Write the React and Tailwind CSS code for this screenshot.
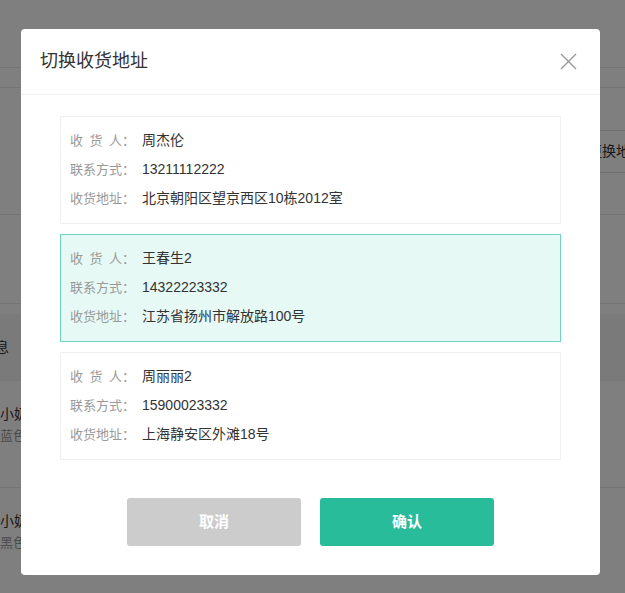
import React from 'react';

const ADDRESSES = [
    { id: 1, name: '周杰伦', phone: '13211112222', address: '北京朝阳区望京西区10栋2012室' },
    { id: 2, name: '王春生2', phone: '14322223332', address: '江苏省扬州市解放路100号' },
    { id: 3, name: '周丽丽2', phone: '15900023332', address: '上海静安区外滩18号' },
];

function Label({ chars }) {
    return (
        <div className="flex w-[72px] shrink-0 text-[13px] text-[#999]">
            <span className="flex w-[52px] justify-between">
                {chars.map((c) => (
                    <span key={c}>{c}</span>
                ))}
            </span>
            <span>：</span>
        </div>
    );
}

function AddressCard({ item, selected }) {
    return (
        <div
            className={`h-[108px] border pl-[9px] pt-[9px] pb-[10px] ${selected
                ? 'border-[#6fd5be] bg-[#e6f9f5]'
                : 'border-[#f0f0f0] bg-white'
                }`}
        >
            <div className="flex h-[29px] items-center">
                <Label chars={['收', '货', '人']} />
                <span className="text-[14px] text-[#333]">{item.name}</span>
            </div>
            <div className="flex h-[29px] items-center">
                <Label chars={['联', '系', '方', '式']} />
                <span className="text-[14px] text-[#333]">{item.phone}</span>
            </div>
            <div className="flex h-[29px] items-center">
                <Label chars={['收', '货', '地', '址']} />
                <span className="text-[14px] text-[#333]">{item.address}</span>
            </div>
        </div>
    );
}

export default function App() {
    const selectedId = 2;

    return (
        <div className="relative h-[593px] w-full overflow-hidden bg-white font-['Liberation_Sans','Noto_Sans_CJK_SC',sans-serif]">
            {/* page behind the dialog */}
            <div className="h-[68px] border-b border-[#e8e8e8]" />
            <div className="h-[20px] border-b border-[#e8e8e8]" />
            <div className="h-[127px] border-b border-[#e8e8e8] pt-[42px]">
                <div className="flex pl-[586px]">
                    <div className="flex h-[43px] w-[90px] shrink-0 items-center border border-[#dcdcdc] pl-[1px] text-[14px] text-[#333]">
                        更换地址
                    </div>
                </div>
            </div>
            <div className="mt-[88px] border-t border-[#e8e8e8] pt-[10px]">
                <div className="flex h-[67px] items-center bg-[#f5f5f5] text-[14px] text-[#333]">
                    <span className="-ml-[47px]">商品信息</span>
                </div>
                <div className="h-[107px] border-b border-[#e8e8e8] pt-[22px]">
                    <div className="h-[22px] text-[14px] leading-[22px] text-[#333]">小奶瓶保温杯</div>
                    <div className="h-[22px] text-[13px] leading-[22px] text-[#999]">蓝色 500ml</div>
                </div>
                <div className="pt-[22px]">
                    <div className="h-[22px] text-[14px] leading-[22px] text-[#333]">小奶瓶保温杯</div>
                    <div className="h-[22px] text-[13px] leading-[22px] text-[#999]">黑色 500ml</div>
                </div>
            </div>

            {/* mask */}
            <div className="absolute inset-0 bg-black/50" />

            {/* dialog */}
            <div className="absolute left-[21px] top-[29px] flex h-[546px] w-[579px] flex-col rounded-[4px] bg-white">
                <div className="flex h-[66px] shrink-0 items-center justify-between border-b border-[#f0f0f0] pl-[19px] pr-[23px]">
                    <h2 className="text-[18px] text-[#333]">切换收货地址</h2>
                    <button className="text-[#999]">
                        <svg width="17" height="17" viewBox="0 0 17 17" fill="none" stroke="currentColor" strokeWidth="1.4">
                            <path d="M1 1L16 16M16 1L1 16" />
                        </svg>
                    </button>
                </div>

                <div className="flex flex-col gap-[10px] px-[39px] pt-[21px]">
                    {ADDRESSES.map((item) => (
                        <AddressCard key={item.id} item={item} selected={item.id === selectedId} />
                    ))}
                </div>

                <div className="mt-[38px] flex justify-center gap-[19px]">
                    <button className="h-[48px] w-[174px] rounded-[3px] bg-[#cccccc] text-[15px] font-bold text-white">
                        取消
                    </button>
                    <button className="h-[48px] w-[174px] rounded-[3px] bg-[#29bc9b] text-[15px] font-bold text-white">
                        确认
                    </button>
                </div>
            </div>
        </div>
    );
}
